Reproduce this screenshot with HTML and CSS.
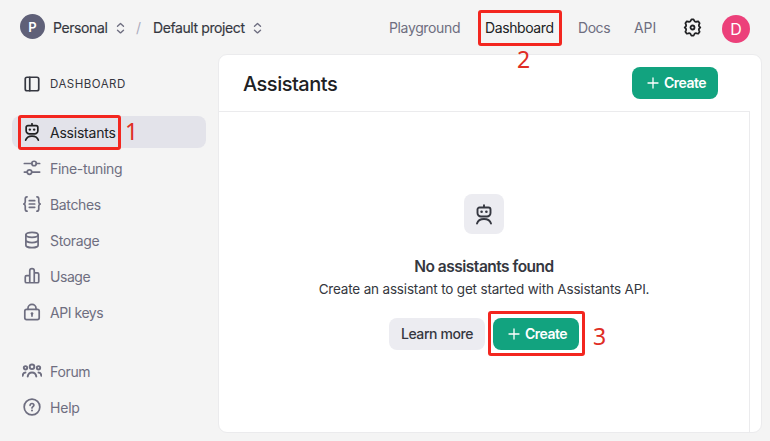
FILE: index.html
```
<!DOCTYPE html>
<html lang="en">
<head>
<meta charset="utf-8">
<title>Assistants</title>
<link rel="stylesheet" href="styles.css">
</head>
<body>
<svg class="defs" aria-hidden="true">
  <symbol id="robot" viewBox="0 0 20 20"><path d="M10 .8v2.200M5.500 3h9a2 2 0 0 1 2 2v3.500a3.500 3.500 0 0 1-3.500 3.500H7a3.500 3.500 0 0 1-3.500-3.500V5a2 2 0 0 1 2-2ZM3 19c.8-2.800 3.500-4.500 7-4.500s6.200 1.700 7 4.500"/><circle class="dot" cx="7.600" cy="7.300" r="1.300"/><circle class="dot" cx="12.400" cy="7.300" r="1.300"/></symbol>
  <symbol id="updown" viewBox="0 0 10 14"><path d="M1.500 5 5 1.800 8.500 5M1.500 9.500 5 12.700l3.500-3.200"/></symbol>
  <symbol id="plus" viewBox="0 0 12 12"><path d="M6 1v10M1 6h10"/></symbol>
</svg>
<header class="topbar">
  <div class="crumbs">
    <span class="avatar org">P</span>
    <span class="crumb personal">Personal</span>
    <svg class="updown"><use href="#updown"/></svg>
    <span class="slash">/</span>
    <span class="crumb project">Default project</span>
    <svg class="updown"><use href="#updown"/></svg>
  </div>
  <nav class="links">
    <a class="playground">Playground</a>
    <a class="current">Dashboard<span class="mark mark-two"></span><span class="num num-two">2</span></a>
    <a class="docs">Docs</a>
    <a class="api">API</a>
    <svg class="gear" viewBox="0 0 20 20"><path d="M8.200 2.800 8.900 1.500h2.200l.7 1.300a2 2 0 0 0 2.600 1l1.600-.3 1.500 2-.7 1.600a2 2 0 0 0 .4 2l1 .9-1 .9a2 2 0 0 0-.4 2l.7 1.600-1.500 2-1.600-.3a2 2 0 0 0-2.600 1l-.7 1.300H8.900l-.7-1.300a2 2 0 0 0-2.600-1l-1.600.3-1.500-2 .7-1.600a2 2 0 0 0-.4-2l-1-.9 1-.9a2 2 0 0 0 .4-2l-.7-1.600 1.500-2 1.600.3a2 2 0 0 0 2.600-1Z"/><circle cx="10" cy="10" r="2.100"/></svg>
    <span class="avatar user">D</span>
  </nav>
</header>
<div class="layout">
  <aside class="sidebar">
    <div class="heading">
      <svg viewBox="0 0 20 20"><rect x="2.500" y="2.500" width="15" height="15" rx="2"/><path d="M7.500 2.500v15"/></svg>
      <span>DASHBOARD</span>
    </div>
    <a class="item active"><svg><use href="#robot"/></svg><span class="label tight">Assistants</span><span class="mark mark-one"></span><span class="num num-one">1</span></a>
    <a class="item"><svg viewBox="0 0 20 20"><path d="M1.500 5h8.300M14.800 5h3.700M1.500 14.500h3.200M9.700 14.500h8.800"/><circle cx="12.300" cy="5" r="2.500"/><circle cx="7.200" cy="14.500" r="2.500"/></svg><span class="label">Fine-tuning</span></a>
    <a class="item"><svg viewBox="0 0 20 20"><path d="M4.500 2C2.800 2 2.500 3 2.500 4.500v3C2.500 9 1.800 9.700.8 10c1 .3 1.700 1 1.700 2.500v3c0 1.500.3 2.500 2 2.500M15.500 2c1.700 0 2 1 2 2.500v3c0 1.500.7 2.200 1.700 2.500-1 .3-1.700 1-1.700 2.500v3c0 1.500-.3 2.500-2 2.500M7 6.300h6M7 10h6M7 13.700h6"/></svg><span class="label batches">Batches</span></a>
    <a class="item"><svg viewBox="0 0 20 20"><ellipse cx="10" cy="4.300" rx="6.800" ry="2.800"/><path d="M3.200 4.300v11.400c0 1.500 3 2.800 6.800 2.800s6.800-1.300 6.800-2.800V4.300M3.200 10c0 1.500 3 2.800 6.800 2.800s6.800-1.300 6.800-2.800"/></svg><span class="label">Storage</span></a>
    <a class="item"><svg viewBox="0 0 20 20"><path d="M7.500 9.500H4A1.500 1.500 0 0 0 2.500 11v5A1.500 1.500 0 0 0 4 17.500h12a1.500 1.500 0 0 0 1.500-1.500V8A1.500 1.500 0 0 0 16 6.500h-3.500M7.500 17.500V4.200a2.500 2.500 0 0 1 5 0v13.300"/></svg><span class="label tighter">Usage</span></a>
    <a class="item"><svg viewBox="0 0 20 20"><rect x="2" y="7" width="16" height="11.500" rx="2"/><path d="M5.500 7V6a4.500 4.500 0 0 1 9 0v1M10 12.500v2"/><circle class="dot" cx="10" cy="11.700" r="1.500"/></svg><span class="label tighter">API keys</span></a>
    <div class="support">
      <a class="item"><svg class="people" viewBox="0 0 20 20"><circle cx="10" cy="5.800" r="2.300"/><circle cx="3.500" cy="6.800" r="1.700"/><circle cx="16.500" cy="6.800" r="1.700"/><path d="M5.700 15.500c.4-2.500 2-4 4.300-4s3.900 1.500 4.300 4M.7 14.800c.1-2 1-3.300 2.800-3.300M19.300 14.800c-.1-2-1-3.300-2.800-3.300"/></svg><span class="label">Forum</span></a>
      <a class="item"><svg viewBox="0 0 20 20"><circle cx="10" cy="10" r="8.700"/><path d="M7.900 8.100c.1-1.300.9-2 2.100-2s2.100.8 2.100 1.900c0 1.500-2.100 1.600-2.100 3.100"/><circle class="dot" cx="10" cy="13.900" r="1.100"/></svg><span class="label tight">Help</span></a>
    </div>
  </aside>
  <main class="panel">
    <div class="title-row">
      <h1>Assistants</h1>
      <button class="btn primary"><svg><use href="#plus"/></svg><span>Create</span></button>
    </div>
    <section class="content">
      <div class="tile"><svg><use href="#robot"/></svg></div>
      <h2>No assistants found</h2>
      <p>Create an assistant to get started with Assistants API.</p>
      <div class="actions">
        <button class="btn secondary"><span>Learn more</span></button>
        <button class="btn primary"><svg><use href="#plus"/></svg><span>Create</span><i class="mark mark-three"></i><b class="num num-three">3</b></button>
      </div>
    </section>
  </main>
</div>
</body>
</html>
```
FILE: styles.css
```
* { box-sizing: border-box; }
body { margin: 0; width: 770px; height: 441px; overflow: hidden; display: flex; flex-direction: column; background: #f4f4f4; color: #353740; font: 14px/20px Inter, "Liberation Sans", sans-serif; }
svg { fill: none; stroke: currentColor; stroke-width: 1.9; stroke-linecap: round; stroke-linejoin: round; flex: none; }
.defs { position: absolute; width: 0; height: 0; }
.dot { fill: currentColor; stroke: none; }
a, span { white-space: nowrap; }
.topbar { flex: none; height: 54px; display: flex; justify-content: space-between; padding: 0 20px; }
.crumbs { display: flex; align-items: center; height: 56px; }
.avatar { display: flex; align-items: center; justify-content: center; border-radius: 50%; color: #fff; flex: none; }
.org { width: 25px; height: 25px; background: #5f6078; font-size: 13px; font-weight: 600; margin: 0 8px 3px 0; }
.crumb { color: #353740; -webkit-text-stroke: .15px; }
.personal { width: 55px; letter-spacing: -.4px; }
.project { width: 92px; letter-spacing: -.4px; }
.updown { width: 9px; height: 12px; margin: 0 0 1px 8px; color: #6e6e80; stroke-width: 1.6; }
.slash { width: 6px; margin: 0 11px; color: #acacbe; }
.links { display: flex; align-items: center; height: 56px; color: #6e6e80; }
.playground { width: 71px; margin-right: 25px; letter-spacing: -.36px; }
.current { position: relative; width: 69px; margin-right: 24px; color: #202123; letter-spacing: -.4px; }
.docs { width: 32px; margin-right: 24px; letter-spacing: -.45px; }
.api { width: 22px; margin-right: 27px; letter-spacing: -.1px; }
.gear { width: 19px; height: 19px; color: #202123; margin: 0 20px 2px 0; }
.user { width: 28px; height: 28px; background: #ec407a; font-size: 16px; margin-top: 2px; }
.layout { flex: 1; display: flex; gap: 12px; padding: 0 8px 8px 12px; min-height: 0; }
.sidebar { width: 194px; display: flex; flex-direction: column; gap: 4px; padding-top: 14px; }
.heading, .item { position: relative; height: 32px; display: flex; align-items: center; gap: 9px; padding-left: 11px; color: #6e6e80; }
.heading { margin-bottom: 12px; color: #353740; font-size: 11.5px; letter-spacing: .5px; }
.heading svg, .item svg { width: 18px; height: 18px; }
.item svg { margin-bottom: 0; }
.item .people { width: 20px; height: 20px; margin: 0 -1px; }
.label { padding-top: 2px; letter-spacing: -.33px; }
.batches { letter-spacing: -.35px; }
.tight { letter-spacing: -.22px; }
.tighter { letter-spacing: -.45px; }
.active { background: #e3e3ea; border-radius: 8px; color: #202123; }
.support { margin-top: 23px; display: flex; flex-direction: column; gap: 4px; }
.panel { width: 544px; height: 379px; background: #fff; border: 1px solid #ebebed; border-radius: 9px; padding-right: 11px; display: flex; flex-direction: column; }
.title-row { height: 57px; display: flex; align-items: center; justify-content: space-between; border-bottom: 1px solid #ebebed; padding: 0 32px 0 24px; flex: none; }
h1, h2, p { margin: 0; white-space: nowrap; }
h1 { font-size: 20px; line-height: 28px; font-weight: 500; color: #202123; padding-top: 1px; letter-spacing: -.5px; }
.btn { position: relative; height: 32px; border: 0; border-radius: 8px; padding: 0; display: flex; align-items: center; justify-content: center; gap: 5px; font: 500 14px/20px Inter, "Liberation Sans", sans-serif; letter-spacing: -.4px; }
.primary { width: 86px; background: #12a37f; color: #fff; font-weight: 600; letter-spacing: -.55px; }
.primary svg { width: 12px; height: 12px; stroke-width: 1.3; margin-left: 3px; }
.secondary { width: 96px; background: #ececf1; color: #353740; }
.content { flex: 1; border-right: 1px solid #ebebed; display: flex; flex-direction: column; align-items: center; padding-top: 82px; }
.tile { width: 40px; height: 40px; border-radius: 8px; background: #ececf1; display: flex; align-items: center; justify-content: center; }
.tile svg { width: 20px; height: 21px; }
h2 { margin-top: 21px; font-size: 15.5px; line-height: 24px; font-weight: 600; letter-spacing: -.5px; }
p { line-height: 20px; font-size: 13.5px; letter-spacing: -.18px; }
.actions { display: flex; gap: 8px; margin-top: 19px; }
.mark { position: absolute; border: 3px solid #f3261f; border-radius: 3px; }
.mark-one { left: 6px; top: -1px; width: 103px; height: 35px; }
.mark-two { left: -7px; top: -8px; width: 84px; height: 36px; }
.mark-three { left: -5px; top: -7px; width: 97px; height: 45px; }
.num { position: absolute; color: #e02d24; font: 400 23px/26px "Noto Sans", sans-serif; letter-spacing: 0; }
.num-one { left: 113px; top: 2px; }
.num-two { left: 32px; top: 28px; }
.num-three { left: 100px; top: 5px; }
```
